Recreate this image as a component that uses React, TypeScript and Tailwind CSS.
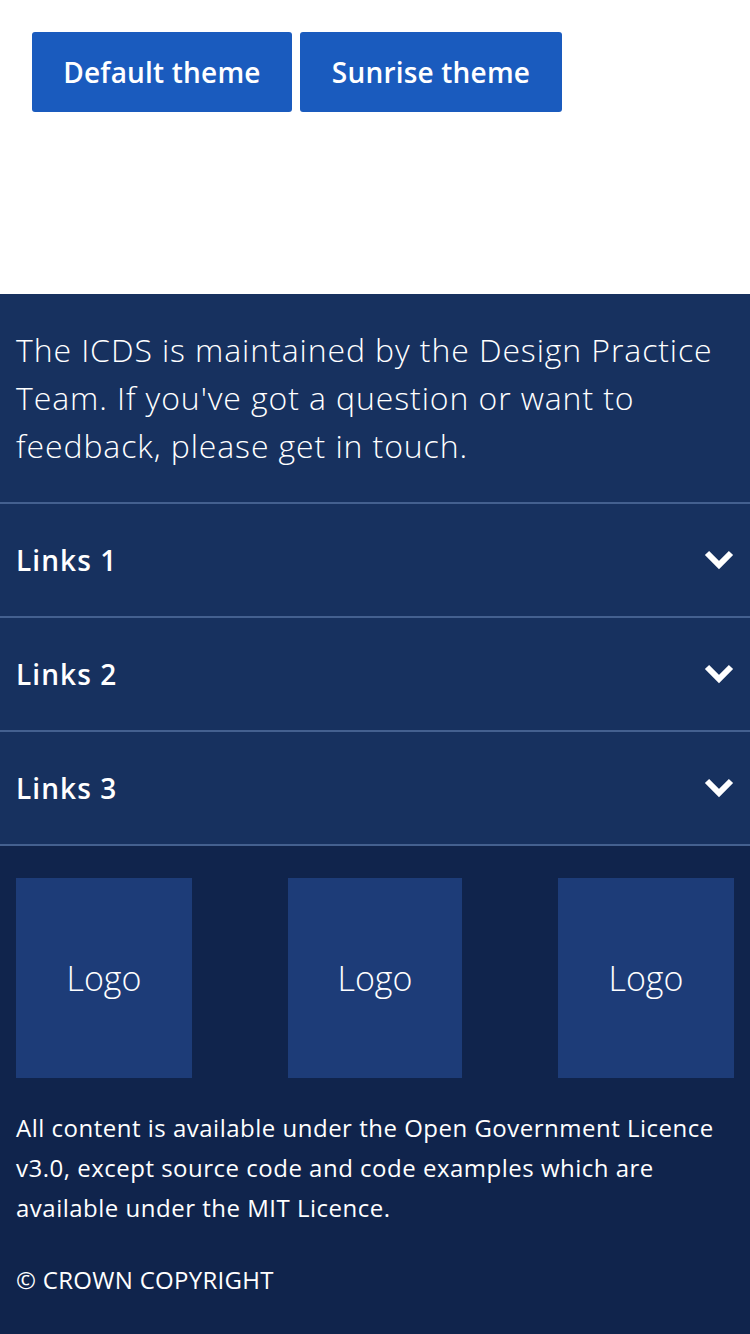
import React from "react";

function Chevron() {
  return (
    <svg width="30" height="20" viewBox="0 0 30 20" fill="none">
      <path d="M3 3 L15 15 L27 3" stroke="white" strokeWidth="6" strokeLinecap="butt" strokeLinejoin="miter" />
    </svg>
  );
}

export default function App() {
  const font = { fontFamily: '"Open Sans", "Noto Sans", sans-serif' };
  return (
    <div className="w-[750px] min-h-[1334px] bg-white" style={font}>
      <div className="flex gap-2 pl-8 pt-8 h-[294px]">
        <button className="h-20 w-[260px] bg-[#1a5bbe] text-white text-[28px] font-semibold rounded-[3px] tracking-[0.2px]">Default theme</button>
        <button className="h-20 w-[262px] bg-[#1a5bbe] text-white text-[28px] font-semibold rounded-[3px] tracking-[0.2px]">Sunrise theme</button>
      </div>
      <footer className="text-white">
        <div className="bg-[#17315f]">
          <p className="px-4 pt-8 pb-8 text-[32px] leading-[48px] font-light tracking-[0.9px]">
            The ICDS is maintained by the Design Practice Team. If you've got a question or want to feedback, please get in touch.
          </p>
          {["Links 1", "Links 2", "Links 3"].map((l) => (
            <div key={l} className="flex items-center justify-between h-[114px] border-t-2 border-[#44608f] pl-4 pr-4">
              <span className="text-[28px] font-semibold tracking-[1.1px]">{l}</span>
              <Chevron />
            </div>
          ))}
        </div>
        <div className="bg-[#10244c] border-t-2 border-[#44608f] px-4 pt-8 pb-10">
          <div className="flex justify-between">
            <div className="w-[176px] h-[200px] bg-[#1d3c78] flex items-center justify-center text-[34px] font-light">Logo</div>
            <div className="w-[174px] h-[200px] bg-[#1d3c78] flex items-center justify-center text-[34px] font-light">Logo</div>
            <div className="w-[176px] h-[200px] bg-[#1d3c78] flex items-center justify-center text-[34px] font-light">Logo</div>
          </div>
          <p className="mt-[30px] text-[24px] leading-[40px] tracking-[0.5px]">
            All content is available under the Open Government Licence v3.0, except source code and code examples which are available under the MIT Licence.
          </p>
          <p className="mt-8 text-[24px] leading-[40px] tracking-[0.3px]">© CROWN COPYRIGHT</p>
        </div>
      </footer>
    </div>
  );
}
